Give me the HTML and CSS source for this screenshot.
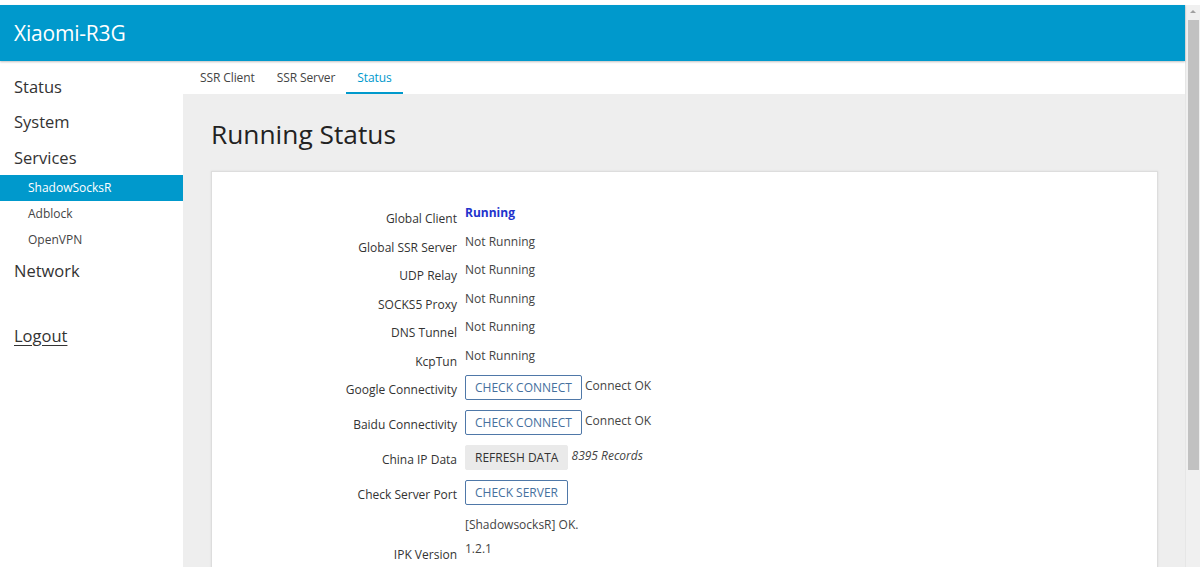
FILE: index.html
```html
<!doctype html>
<html>
	<head>
		<meta http-equiv="Content-Type" content="text/html; charset=utf-8" />
		<meta name="viewport" content="width=device-width, initial-scale=1.0" />
		<title>Xiaomi-R3G - ShadowSocksR - LuCI</title>
		<link rel="stylesheet" href="styles.css">
	</head>
	<body>
		<div class="class___screen">
			<div class="class___page">
				<header class="class___header">
					<a class="class___brand" href="#">Xiaomi-R3G</a>
				</header>
				<div class="class___body">
					<nav class="class___sidebar">
						<a class="class___menu" href="#">Status</a>
						<a class="class___menu" href="#">System</a>
						<a class="class___menu" href="#">Services</a>
						<a class="class___submenu class___submenu_active" href="#">ShadowSocksR</a>
						<a class="class___submenu" href="#">Adblock</a>
						<a class="class___submenu" href="#">OpenVPN</a>
						<a class="class___menu" href="#">Network</a>
						<a class="class___menu class___logout" href="#">Logout</a>
					</nav>
					<main class="class___main">
						<ul class="class___tabs">
							<li class="class___tab"><a href="#">SSR Client</a></li>
							<li class="class___tab"><a href="#">SSR Server</a></li>
							<li class="class___tab class___tab_active"><a href="#">Status</a></li>
						</ul>
						<div class="class___content">
							<h2 class="class___title">Running Status</h2>
							<div class="class___card">
								<div class="class___row">
									<label class="class___label">Global Client</label>
									<div class="class___value"><b class="class___running">Running</b></div>
								</div>
								<div class="class___row">
									<label class="class___label">Global SSR Server</label>
									<div class="class___value">Not Running</div>
								</div>
								<div class="class___row">
									<label class="class___label">UDP Relay</label>
									<div class="class___value">Not Running</div>
								</div>
								<div class="class___row">
									<label class="class___label">SOCKS5 Proxy</label>
									<div class="class___value">Not Running</div>
								</div>
								<div class="class___row">
									<label class="class___label">DNS Tunnel</label>
									<div class="class___value">Not Running</div>
								</div>
								<div class="class___row">
									<label class="class___label">KcpTun</label>
									<div class="class___value">Not Running</div>
								</div>
								<div class="class___row">
									<label class="class___label">Google Connectivity</label>
									<div class="class___value class___value_button">
										<button class="class___button">CHECK CONNECT</button>
										<span class="class___result">Connect OK</span>
									</div>
								</div>
								<div class="class___row">
									<label class="class___label">Baidu Connectivity</label>
									<div class="class___value class___value_button">
										<button class="class___button">CHECK CONNECT</button>
										<span class="class___result">Connect OK</span>
									</div>
								</div>
								<div class="class___row">
									<label class="class___label">China IP Data</label>
									<div class="class___value class___value_button">
										<button class="class___button class___button_gray">REFRESH DATA</button>
										<em class="class___result">8395 Records</em>
									</div>
								</div>
								<div class="class___row">
									<label class="class___label">Check Server Port</label>
									<div class="class___value class___value_server">
										<button class="class___button">CHECK SERVER</button>
										<div class="class___server_result">[ShadowsocksR] OK.</div>
									</div>
								</div>
								<div class="class___row">
									<label class="class___label">IPK Version</label>
									<div class="class___value">1.2.1</div>
								</div>
							</div>
						</div>
					</main>
				</div>
			</div>
			<div class="class___scrollbar">
				<div class="class___scroll_arrow"></div>
				<div class="class___scroll_thumb"></div>
			</div>
		</div>
	</body>
</html>
```

FILE: styles.css
```css
* {
	box-sizing : border-box;
}
html, body {
	margin : 0;
	height : 100%;
	overflow : hidden;
	background-color : #ffffff;
	font-family : "Open Sans", "Noto Sans CJK SC", sans-serif;
	color : #333333;
}
a {
	text-decoration : none;
	color : inherit;
}
.class___screen {
	display : flex;
	height : 567px;
	padding-top : 5px;
}
.class___page {
	flex : 1;
	display : flex;
	flex-direction : column;
	min-width : 0;
}
.class___header {
	height : 56px;
	background-color : #0099cc;
	display : flex;
	align-items : center;
	padding-left : 14px;
	box-shadow : 0 1px 2px rgba(0, 0, 0, 0.25);
	position : relative;
	z-index : 1;
}
.class___brand {
	color : #ffffff;
	font-size : 21px;
	letter-spacing : -0.2px;
}
.class___body {
	flex : 1;
	display : flex;
	min-height : 0;
}
.class___sidebar {
	width : 183px;
	flex : none;
	display : flex;
	flex-direction : column;
	padding-top : 7.5px;
	background-color : #ffffff;
}
.class___menu {
	display : block;
	height : 35.5px;
	line-height : 35.5px;
	padding-left : 14px;
	font-size : 16.5px;
	color : #333333;
}
.class___logout {
	margin-top : 29px;
	text-decoration : underline;
	text-underline-offset : 3px;
}
.class___submenu {
	display : block;
	height : 26px;
	line-height : 26px;
	padding-left : 28px;
	font-size : 12px;
	color : #444444;
}
.class___submenu_active {
	background-color : #0099cc;
	color : #ffffff;
}
.class___main {
	flex : 1;
	display : flex;
	flex-direction : column;
	min-width : 0;
	background-color : #eeeeee;
}
.class___tabs {
	list-style : none;
	margin : 0;
	padding : 0 0 0 6px;
	height : 33px;
	display : flex;
	background-color : #ffffff;
}
.class___tab a {
	display : block;
	height : 33px;
	line-height : 34px;
	padding : 0 11px;
	font-size : 12px;
	letter-spacing : -0.1px;
	color : #444444;
	border-bottom : 2px solid transparent;
}
.class___tab_active a {
	color : #0099cc;
	border-bottom-color : #0099cc;
}
.class___content {
	flex : 1;
	padding : 25px 27px 0 28px;
}
.class___title {
	margin : 0 0 21px 0;
	font-size : 26.3px;
	line-height : 31px;
	font-weight : normal;
	color : #222222;
}
.class___card {
	background-color : #ffffff;
	border : 1px solid #dddddd;
	box-shadow : 0 0 2px rgba(0, 0, 0, 0.08);
	padding-top : 32px;
	display : flex;
	flex-direction : column;
	gap : 4.5px;
	height : 500px;
}
.class___row {
	display : flex;
	align-items : flex-start;
}
.class___label {
	width : 245px;
	flex : none;
	text-align : right;
	padding-top : 6px;
	line-height : 18px;
	font-size : 12px;
	color : #333333;
}
.class___value {
	margin-left : 8px;
	line-height : 18px;
	font-size : 12px;
	color : #444444;
}
.class___value_button {
	padding : 0 0 6px 0;
}
.class___value_server {
	padding : 0 0 1px 0;
}
.class___running {
	color : #2233cc;
}
.class___button {
	height : 24.5px;
	padding : 0 9px;
	border : 1px solid #4f78a8;
	border-radius : 2px;
	background-color : #ffffff;
	color : #45709e;
	font-family : "Open Sans", sans-serif;
	font-size : 12px;
	vertical-align : top;
}
.class___button_gray {
	border-color : #eaeaea;
	background-color : #eaeaea;
	color : #333333;
}
.class___result {
	vertical-align : top;
	line-height : 22px;
}
.class___server_result {
	margin-top : 11.5px;
}
.class___scrollbar {
	width : 15px;
	flex : none;
	background-color : #f0f0f0;
	border-left : 1px solid #e6e6e6;
	display : flex;
	flex-direction : column;
	align-items : center;
}
.class___scroll_arrow {
	margin-top : 5px;
	width : 0;
	height : 0;
	border-left : 3px solid transparent;
	border-right : 3px solid transparent;
	border-bottom : 3px solid #a0a0a0;
}
.class___scroll_thumb {
	margin-top : 7px;
	width : 11px;
	height : 450px;
	background-color : #c1c1c1;
}
```
